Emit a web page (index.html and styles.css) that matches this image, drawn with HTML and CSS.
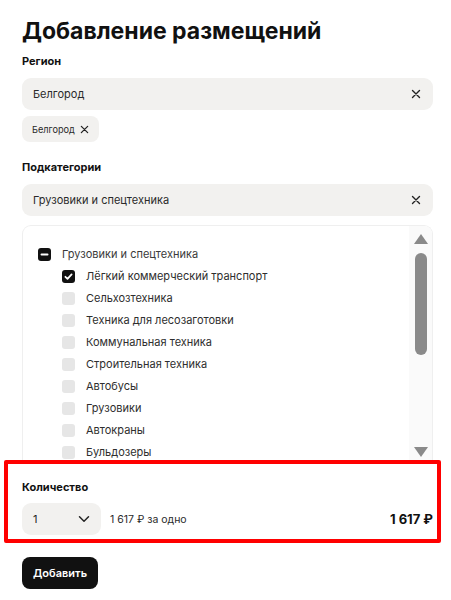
FILE: index.html
```html
<!DOCTYPE html>
<html lang="ru">
<head>
<meta charset="utf-8">
<link rel="stylesheet" href="styles.css">
</head>
<body>
<main class="page">
  <h1 class="title">Добавление размещений</h1>

  <div class="label">Регион</div>
  <div class="input">
    <span class="input-text">Белгород</span>
    <svg class="clear" width="10" height="10" viewBox="0 0 10 10"><path d="M1.5 1.5L8.5 8.5M8.5 1.5L1.5 8.5" stroke="#222" stroke-width="1.4" stroke-linecap="round"/></svg>
  </div>
  <div class="chips">
    <span class="chip">Белгород
      <svg class="chip-x" width="9" height="9" viewBox="0 0 10 10"><path d="M1.5 1.5L8.5 8.5M8.5 1.5L1.5 8.5" stroke="#222" stroke-width="1.4" stroke-linecap="round"/></svg>
    </span>
  </div>

  <div class="label label-sub">Подкатегории</div>
  <div class="input">
    <span class="input-text">Грузовики и спецтехника</span>
    <svg class="clear" width="10" height="10" viewBox="0 0 10 10"><path d="M1.5 1.5L8.5 8.5M8.5 1.5L1.5 8.5" stroke="#222" stroke-width="1.4" stroke-linecap="round"/></svg>
  </div>

  <div class="listbox">
    <ul class="list">
      <li class="row row-parent"><span class="cb cb-on"><svg width="13" height="13" viewBox="0 0 13 13"><path d="M3.5 6.5H9.5" stroke="#fff" stroke-width="2" stroke-linecap="round"/></svg></span>Грузовики и спецтехника</li>
      <li class="row row-child"><span class="cb cb-on"><svg width="13" height="13" viewBox="0 0 13 13"><path d="M3.4 6.8L5.5 8.8L9.6 4.4" fill="none" stroke="#fff" stroke-width="1.8" stroke-linecap="round" stroke-linejoin="round"/></svg></span>Лёгкий коммерческий транспорт</li>
      <li class="row row-child"><span class="cb"></span>Сельхозтехника</li>
      <li class="row row-child"><span class="cb"></span>Техника для лесозаготовки</li>
      <li class="row row-child"><span class="cb"></span>Коммунальная техника</li>
      <li class="row row-child"><span class="cb"></span>Строительная техника</li>
      <li class="row row-child"><span class="cb"></span>Автобусы</li>
      <li class="row row-child"><span class="cb"></span>Грузовики</li>
      <li class="row row-child"><span class="cb"></span>Автокраны</li>
      <li class="row row-child"><span class="cb"></span>Бульдозеры</li>
    </ul>
    <div class="scrollbar">
      <span class="arrow arrow-up"></span>
      <span class="thumb"></span>
      <span class="track-rest"></span>
      <span class="arrow arrow-down"></span>
    </div>
  </div>

  <section class="qty">
    <div class="label">Количество</div>
    <div class="qty-row">
      <div class="select">
        <span>1</span>
        <svg width="12" height="8" viewBox="0 0 12 8"><path d="M1.5 1.8L6 6.2L10.5 1.8" fill="none" stroke="#222" stroke-width="1.5" stroke-linecap="round" stroke-linejoin="round"/></svg>
      </div>
      <span class="unit">1 617 ₽ за одно</span>
      <span class="total">1 617 ₽</span>
    </div>
    <div class="highlight"></div>
  </section>

  <button class="btn">Добавить</button>
</main>
</body>
</html>
```

FILE: styles.css
```css
* { box-sizing: border-box; }
html, body { margin: 0; padding: 0; background: #fff; }
body {
  font-family: Inter, "Noto Sans", "DejaVu Sans", sans-serif;
  color: #1a1a1a;
  width: 451px;
}
.page {
  padding: 16px 18px 0 22px;
  display: flex;
  flex-direction: column;
}
.title {
  margin: 0;
  font-size: 23px;
  line-height: 30px;
  font-weight: 700;
  letter-spacing: 0;
  color: #111;
}
.label {
  font-size: 11px;
  line-height: 14px;
  font-weight: 700;
  color: #111;
  margin-top: 8px;
}
.label-sub { margin-top: 18px; }
.input {
  margin-top: 10px;
  height: 32px;
  border-radius: 9px;
  background: #f2f1ef;
  display: flex;
  align-items: center;
  justify-content: space-between;
  padding: 0 12px 0 11px;
}
.input-text { font-size: 11px; color: #2a2a2a; }
.clear { display: block; }
.chips { margin-top: 6px; display: flex; }
.chip {
  height: 26px;
  padding: 0 10px 0 10px;
  border-radius: 8px;
  background: #f2f1ef;
  font-size: 9.2px;
  color: #2a2a2a;
  display: inline-flex;
  align-items: center;
  gap: 5px;
}
.chip-x { display: block; }
.listbox {
  margin-top: 9px;
  height: 237px;
  border: 1px solid #efefef;
  border-bottom: none;
  border-radius: 9px 9px 0 0;
  display: flex;
  overflow: hidden;
}
.list {
  flex: 1;
  list-style: none;
  margin: 0;
  padding: 17px 0 0 15px;
  overflow: hidden;
}
.row {
  height: 22px;
  display: flex;
  align-items: center;
  font-size: 11px;
  color: #2e2e2e;
}
.row-parent { color: #3a3a3a; }
.row-child { padding-left: 24px; }
.cb {
  width: 13px;
  height: 13px;
  border-radius: 3px;
  background: #e6e6e6;
  margin-right: 11px;
  flex: none;
  display: flex;
}
.cb-on { background: #111; }
.cb svg { display: block; }
.scrollbar {
  width: 23px;
  flex: none;
  background: #fafafa;
  display: flex;
  flex-direction: column;
  align-items: center;
  padding: 8px 0 0 0;
}
.arrow {
  width: 0;
  height: 0;
  border-left: 7px solid transparent;
  border-right: 7px solid transparent;
}
.arrow-up { border-bottom: 10px solid #8a8a8a; }
.arrow-down { border-top: 10px solid #8a8a8a; }
.thumb {
  margin-top: 9px;
  width: 12px;
  height: 102px;
  border-radius: 6px;
  background: #8a8a8a;
}
.track-rest { height: 92px; }
.qty {
  position: relative;
  padding-top: 18px;
}
.qty .label { margin-top: 0; }
.qty-row {
  margin-top: 9px;
  display: flex;
  align-items: center;
}
.select {
  width: 79px;
  height: 32px;
  border-radius: 9px;
  background: #f2f1ef;
  display: flex;
  align-items: center;
  justify-content: space-between;
  padding: 0 11px 0 11px;
  font-size: 11px;
  color: #222;
}
.select svg { display: block; }
.unit {
  margin-left: 9px;
  font-size: 10.5px;
  color: #2a2a2a;
}
.total {
  margin-left: auto;
  font-size: 13px;
  font-weight: 700;
  color: #111;
}
.highlight {
  position: absolute;
  top: -2px;
  left: -18px;
  right: -8px;
  bottom: -8px;
  border: 4px solid #ff0000;
  border-radius: 2px;
  pointer-events: none;
}
.btn {
  margin-top: 22px;
  align-self: flex-start;
  height: 32px;
  padding: 0 11px;
  border: none;
  border-radius: 8px;
  background: #111;
  color: #fff;
  font-family: inherit;
  font-size: 11px;
  font-weight: 600;
}
```
